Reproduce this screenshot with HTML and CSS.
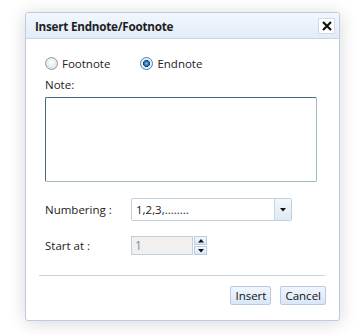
FILE: index.html
```html
<!DOCTYPE html>
<html>
<head>
<meta charset="utf-8">
<link rel="stylesheet" href="styles.css">
</head>
<body>
<div class="dialog">
  <div class="header">
    <span class="title">Insert Endnote/Footnote</span>
    <span class="close"><svg width="10" height="10" viewBox="0 0 10 10"><path d="M1 1L9 9M9 1L1 9" stroke="#111" stroke-width="2.2" fill="none"/></svg></span>
  </div>
  <div class="content">
    <div class="radios">
      <label class="radio"><span class="dot"></span>Footnote</label>
      <label class="radio on"><span class="dot"></span>Endnote</label>
    </div>
    <div class="note-label">Note:</div>
    <div class="textarea"></div>
    <div class="field num-row">
      <span class="flabel">Numbering :</span>
      <div class="select">
        <span class="sval">1,2,3,........</span>
        <span class="sbtn"><svg width="6" height="4" viewBox="0 0 6 4"><path d="M0 0h6L3 3.5z" fill="#111"/></svg></span>
      </div>
    </div>
    <div class="field start-row">
      <span class="flabel">Start at :</span>
      <div class="spin-input">1</div>
      <div class="spin-btns">
        <span class="sb"><svg width="6" height="4" viewBox="0 0 6 4"><path d="M0 3.5h6L3 0z" fill="#111"/></svg></span>
        <span class="sb"><svg width="6" height="4" viewBox="0 0 6 4"><path d="M0 0h6L3 3.5z" fill="#111"/></svg></span>
      </div>
    </div>
  </div>
  <div class="sep"></div>
  <div class="footer">
    <span class="btn">Insert</span>
    <span class="btn">Cancel</span>
  </div>
</div>
</body>
</html>
```
FILE: styles.css
```css
html, body { margin: 0; padding: 0; background: #fff; }
body {
  font-family: "Open Sans", "Noto Sans", sans-serif;
  font-size: 11.5px;
  color: #222;
  height: 335px;
  overflow: hidden;
}
.dialog {
  margin: 12px 0 0 25px;
  width: 315px;
  height: 309px;
  box-sizing: border-box;
  border: 1px solid #bccde0;
  border-radius: 3px;
  background: #fff;
  box-shadow: 0 2px 18px rgba(0,0,0,0.16);
  display: flex;
  flex-direction: column;
}
.header {
  height: 25px;
  border-bottom: 1px solid #c3d5e9;
  background: linear-gradient(#f2f7fd, #e2ecf8);
  border-radius: 3px 3px 0 0;
  display: flex;
  align-items: center;
  justify-content: space-between;
  padding: 0 4px 0 9px;
}
.title { font-weight: bold; font-size: 11.7px; color: #1e1e1e; letter-spacing: -0.25px; }
.close {
  width: 15px; height: 14px;
  border: 1px solid #cfdbe8;
  background: #fff;
  display: flex; align-items: center; justify-content: center;
  margin-top: 1px;
}
.content { padding: 0 0 0 19px; }
.radios { display: flex; margin-top: 16px; height: 16px; align-items: center; }
.radio { display: flex; align-items: center; gap: 4px; }
.radio + .radio { margin-left: 30px; }
.dot {
  width: 11px; height: 11px;
  border: 1px solid #9a9a9a;
  border-radius: 50%;
  background: radial-gradient(circle at 50% 40%, #ffffff 0, #e9e9e9 55%, #cfcfcf 100%);
  box-sizing: content-box;
}
.radio.on .dot {
  border-color: #4e7fa8;
  background: radial-gradient(circle at 50% 50%, #7ec3f3 0, #1d6db3 30%, #0b3d72 42%, #e7eef5 48%, #f3f6f9 100%);
}
.note-label { margin-top: 7px; height: 14px; line-height: 14px; }
.textarea {
  margin-top: 5px;
  width: 272px; height: 85px;
  box-sizing: border-box;
  border: 1px solid #9fb9c2;
  border-top-color: #3f6e78;
  border-left-color: #3f6e78;
  border-radius: 2px;
}
.field { display: flex; align-items: center; }
.flabel { width: 86px; }
.num-row { margin-top: 16px; }
.select {
  width: 161px; height: 23px;
  box-sizing: border-box;
  border: 1px solid #c2d0de;
  border-radius: 2px;
  display: flex;
}
.sval { flex: 1; padding-left: 4px; line-height: 21px; }
.sbtn {
  width: 16px;
  border-left: 1px solid #c8d6e4;
  background: linear-gradient(#f3f7fc, #dfe9f5);
  display: flex; align-items: center; justify-content: center;
}
.start-row { margin-top: 15px; }
.spin-input {
  width: 62px; height: 19px;
  box-sizing: border-box;
  border: 1px solid #bfcfdb;
  background: #f0f0f0;
  color: #8a8a8a;
  padding-left: 3px;
  line-height: 17px;
  font-size: 12px;
}
.spin-btns { margin-left: 1px; display: flex; flex-direction: column; gap: 1px; }
.sb {
  width: 13px; height: 9px;
  box-sizing: border-box;
  border: 1px solid #b8cbe0;
  background: linear-gradient(#f3f7fc, #dce7f5);
  display: flex; align-items: center; justify-content: center;
}
.sep {
  margin: 20px 14px 0 13px;
  height: 1px;
  background: #c3d4e2;
}
.footer {
  display: flex;
  justify-content: flex-end;
  gap: 9px;
  margin: 10px 13px 0 0;
}
.btn {
  height: 19px;
  box-sizing: border-box;
  padding: 0 4px;
  border: 1px solid #b8cbe2;
  border-radius: 2px;
  background: linear-gradient(#f1f6fd, #dae6f6);
  line-height: 17px;
  color: #111;
}
```
